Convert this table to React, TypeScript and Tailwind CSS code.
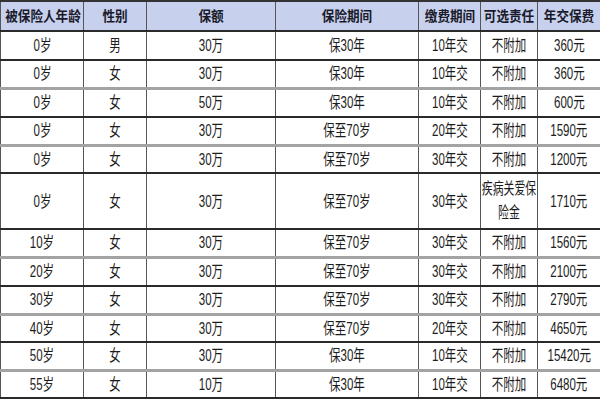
import React from "react";

type Row = {
  age: string;
  sex: string;
  amount: string;
  term: string;
  pay: string;
  extra: React.ReactNode;
  premium: string;
  line: "dark" | "gray";
  h: string;
  tall?: boolean;
};

const rows: Row[] = [
  { age: "0岁", sex: "男", amount: "30万", term: "保30年", pay: "10年交", extra: "不附加", premium: "360元", line: "dark", h: "h-[29px]" },
  { age: "0岁", sex: "女", amount: "30万", term: "保30年", pay: "10年交", extra: "不附加", premium: "360元", line: "gray", h: "h-[28px]" },
  { age: "0岁", sex: "女", amount: "50万", term: "保30年", pay: "10年交", extra: "不附加", premium: "600元", line: "dark", h: "h-[29px]" },
  { age: "0岁", sex: "女", amount: "30万", term: "保至70岁", pay: "20年交", extra: "不附加", premium: "1590元", line: "gray", h: "h-[28px]" },
  { age: "0岁", sex: "女", amount: "30万", term: "保至70岁", pay: "30年交", extra: "不附加", premium: "1200元", line: "dark", h: "h-[28px]" },
  {
    age: "0岁",
    sex: "女",
    amount: "30万",
    term: "保至70岁",
    pay: "30年交",
    extra: (
      <>
        疾病关爱保
        <br />
        险金
      </>
    ),
    premium: "1710元",
    line: "dark",
    h: "h-[56px]",
    tall: true,
  },
  { age: "10岁", sex: "女", amount: "30万", term: "保至70岁", pay: "30年交", extra: "不附加", premium: "1560元", line: "gray", h: "h-[28px]" },
  { age: "20岁", sex: "女", amount: "30万", term: "保至70岁", pay: "30年交", extra: "不附加", premium: "2100元", line: "dark", h: "h-[29px]" },
  { age: "30岁", sex: "女", amount: "30万", term: "保至70岁", pay: "30年交", extra: "不附加", premium: "2790元", line: "gray", h: "h-[28px]" },
  { age: "40岁", sex: "女", amount: "30万", term: "保至70岁", pay: "20年交", extra: "不附加", premium: "4650元", line: "dark", h: "h-[28px]" },
  { age: "50岁", sex: "女", amount: "30万", term: "保30年", pay: "10年交", extra: "不附加", premium: "15420元", line: "gray", h: "h-[28px]" },
  { age: "55岁", sex: "女", amount: "10万", term: "保30年", pay: "10年交", extra: "不附加", premium: "6480元", line: "dark", h: "h-[28px]" },
];

const headers = ["被保险人年龄", "性别", "保额", "保险期间", "缴费期间", "可选责任", "年交保费"];
const widths = [83, 63, 129, 143, 62, 57, 63];

const Txt = ({ children }: { children: React.ReactNode }) => (
  <span className="inline-block whitespace-nowrap scale-x-[0.72] leading-[17px]">{children}</span>
);

export default function App() {
  return (
    <div className="w-[600px] h-[400px] bg-white overflow-hidden font-['Liberation_Sans','Noto_Sans_CJK_SC',sans-serif] text-[#1c1c1c]">
      <table className="w-[600px] table-fixed border-collapse">
        <colgroup>
          {widths.map((w, i) => (
            <col key={i} style={{ width: w }} />
          ))}
        </colgroup>
        <thead>
          <tr className="h-[30px] bg-[#c7d1ee]">
            {headers.map((h, i) => (
              <th
                key={i}
                className="border-t-2 border-b-2 border-x border-t-[#333] border-b-[#2a2a2a] border-x-[#555] p-0 text-center text-[14px] leading-[16px] font-bold text-[#1a1a2a] whitespace-nowrap"
              >
                <span className="inline-block whitespace-nowrap scale-x-[0.9]">{h}</span>
              </th>
            ))}
          </tr>
        </thead>
        <tbody>
          {rows.map((r, i) => {
            const line =
              r.line === "dark"
                ? "border-b-2 border-b-[#2a2a2a]"
                : "border-b-[3px] border-b-[#a3a3a3]";
            const cell = `border-x border-x-[#555] ${line} p-0 text-center text-[16px] leading-[17px] align-middle whitespace-nowrap`;
            return (
              <tr key={i} className={r.h}>
                <td className={cell}><Txt>{r.age}</Txt></td>
                <td className={cell}><Txt>{r.sex}</Txt></td>
                <td className={cell}><Txt>{r.amount}</Txt></td>
                <td className={cell}><Txt>{r.term}</Txt></td>
                <td className={cell}><Txt>{r.pay}</Txt></td>
                <td className={cell}>
                  {r.tall ? (
                    <div className="flex justify-center">
                      <span className="shrink-0 whitespace-nowrap text-center scale-x-[0.68] leading-[24px]">{r.extra}</span>
                    </div>
                  ) : (
                    <Txt>{r.extra}</Txt>
                  )}
                </td>
                <td className={cell}><Txt>{r.premium}</Txt></td>
              </tr>
            );
          })}
        </tbody>
      </table>
    </div>
  );
}
